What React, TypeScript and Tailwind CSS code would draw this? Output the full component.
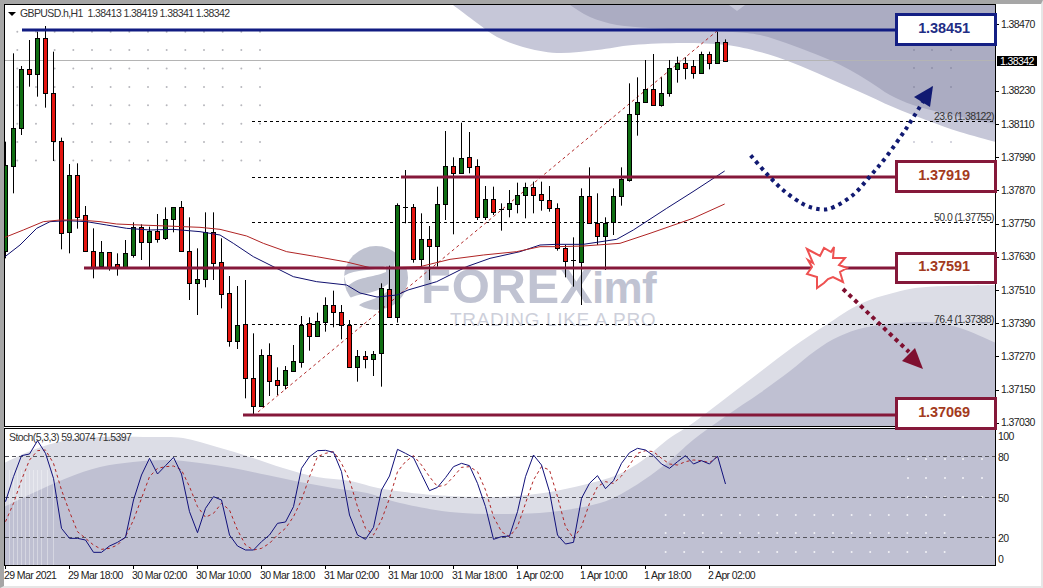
import React from "react";

type Pt = [number, number];
type Candle = [number, number, number, number, "g" | "r" | "d"];

// candle values are read off a 3x zoom, divided by 3 when drawn
const candles: Candle[] = [
  [425, 495, 752, 775, "g"], [160, 385, 497, 580, "g"], [198, 207, 385, 405, "g"], [120, 207, 222, 260, "r"],
  [95, 114, 223, 290, "g"], [78, 114, 280, 323, "r"], [155, 280, 422, 483, "r"], [413, 422, 700, 748, "r"],
  [492, 526, 697, 760, "g"], [490, 526, 650, 686, "r"], [618, 646, 752, 752, "r"], [685, 752, 802, 835, "r"],
  [723, 757, 797, 797, "g"], [757, 757, 802, 812, "r"], [760, 793, 802, 827, "r"], [720, 760, 802, 802, "g"],
  [667, 682, 764, 773, "g"], [673, 682, 725, 780, "r"], [680, 694, 725, 802, "g"], [642, 694, 716, 728, "r"],
  [622, 658, 713, 720, "g"], [622, 622, 656, 697, "g"], [603, 622, 754, 754, "r"], [652, 754, 850, 900, "r"],
  [745, 838, 850, 945, "g"], [637, 697, 838, 862, "g"], [637, 697, 790, 840, "r"], [715, 787, 883, 925, "r"],
  [828, 880, 1022, 1040, "r"], [858, 975, 1022, 1047, "g"], [840, 973, 1135, 1195, "r"], [1000, 1135, 1217, 1245, "r"],
  [1048, 1066, 1217, 1217, "g"], [1030, 1066, 1142, 1188, "r"], [1102, 1140, 1154, 1185, "r"], [1098, 1110, 1154, 1168, "g"],
  [1035, 1083, 1112, 1112, "g"], [948, 975, 1085, 1103, "g"], [952, 970, 1007, 1052, "r"], [938, 964, 1007, 1007, "g"],
  [892, 916, 965, 995, "g"], [872, 916, 937, 982, "r"], [915, 937, 976, 1018, "r"], [960, 974, 1102, 1102, "r"],
  [1050, 1068, 1102, 1145, "g"], [1053, 1068, 1078, 1105, "r"], [1053, 1062, 1078, 1128, "g"], [850, 865, 1060, 1160, "g"],
  [797, 868, 952, 952, "r"], [610, 616, 952, 968, "g"], [510, 620, 622, 670, "d"], [612, 622, 778, 788, "r"],
  [640, 717, 778, 800, "g"], [678, 717, 738, 840, "r"], [560, 613, 737, 800, "g"], [393, 498, 613, 660, "g"],
  [472, 498, 520, 703, "r"], [368, 474, 520, 520, "g"], [396, 472, 502, 520, "r"], [478, 498, 650, 660, "r"],
  [558, 598, 650, 660, "g"], [560, 598, 635, 645, "r"], [610, 628, 630, 692, "d"], [570, 610, 628, 652, "g"],
  [548, 585, 612, 640, "g"], [548, 562, 586, 655, "g"], [545, 560, 584, 640, "r"], [545, 583, 601, 632, "r"],
  [558, 601, 623, 635, "r"], [610, 625, 745, 752, "r"], [735, 745, 782, 832, "r"], [712, 780, 782, 860, "d"],
  [565, 587, 785, 915, "g"], [502, 587, 668, 668, "r"], [580, 668, 707, 735, "r"], [652, 668, 707, 810, "g"],
  [565, 587, 665, 705, "g"], [502, 538, 587, 617, "g"], [250, 343, 540, 545, "g"], [232, 307, 343, 407, "g"],
  [180, 268, 307, 307, "g"], [162, 268, 314, 314, "r"], [232, 280, 315, 320, "g"], [180, 205, 280, 290, "g"],
  [170, 190, 208, 248, "g"], [172, 190, 203, 238, "r"], [180, 197, 220, 236, "r"], [155, 163, 220, 220, "g"],
  [155, 163, 190, 208, "r"], [95, 125, 190, 190, "g"], [118, 125, 182, 182, "r"],
];

const stochMain = [
  635, 560, 497, 492, 452, 490, 565, 715, 745, 745, 750, 787, 787, 768, 757, 742, 630, 555, 505, 552, 527, 502,
  552, 665, 728, 655, 620, 630, 735, 768, 780, 780, 755, 735, 700, 696, 650, 535, 500, 482, 481, 487, 545, 675,
  735, 748, 712, 600, 558, 478, 490, 503, 553, 602, 592, 563, 530, 520, 527, 580, 650, 748, 740, 738, 665, 560,
  495, 525, 605, 735, 762, 757, 625, 580, 557, 596, 572, 520, 488, 475, 480, 497, 522, 535, 515, 497, 522, 512,
  522, 498, 582,
];
const stochSignal = [
  695, 640, 570, 510, 482, 480, 520, 600, 665, 725, 745, 765, 778, 775, 765, 740, 690, 625, 560, 535, 530, 528,
  540, 590, 650, 682, 670, 640, 660, 720, 765, 780, 775, 760, 735, 715, 680, 630, 560, 500, 490, 485, 520, 570,
  650, 715, 735, 690, 625, 545, 515, 497, 525, 560, 590, 585, 560, 532, 530, 545, 600, 680, 725, 740, 710, 640,
  570, 530, 540, 620, 710, 745, 710, 640, 590, 575, 580, 558, 525, 490, 482, 485, 505, 522, 525, 515, 510, 512,
  518, 500,
];

const z1 = (p: Pt[]): Pt[] => p.map(([x, y]) => [x / 3, y / 3]);
const z2 = (p: Pt[]): Pt[] => p.map(([x, y]) => [350 + x / 3, y / 3]);
const z3 = (p: Pt[]): Pt[] => p.map(([x, y]) => [693 + x / 3, y / 3]);

const maBlue: Pt[] = [
  ...z1([[15, 770], [60, 735], [110, 685], [150, 665], [200, 662], [260, 665], [320, 675], [380, 685], [450, 690], [520, 688], [600, 695], [660, 705], [700, 730], [760, 770], [830, 805], [880, 830], [950, 845], [1040, 855]]),
  [360, 293], [377, 297], [397, 295], [408, 290],
  ...z2([[260, 845], [350, 800], [420, 775], [510, 755], [570, 735], [620, 733], [700, 733], [800, 718], [850, 690], [950, 625]]),
  ...z3([[0, 575], [95, 513]]),
];
const maRed: Pt[] = [
  ...z1([[15, 712], [70, 690], [130, 665], [180, 660], [240, 660], [300, 665], [350, 672], [420, 675], [500, 678], [600, 682], [660, 688], [740, 708], [790, 730], [860, 755], [950, 770], [1040, 786]]),
  ...z2([[60, 803], [120, 803], [210, 800], [300, 778], [400, 765], [500, 755], [570, 740], [620, 740], [700, 738], [810, 730], [900, 700]]),
  ...z3([[0, 655], [95, 612]]),
];
const blueCurve: Pt[] = z3([[173, 466], [220, 520], [270, 570], [330, 612], [380, 628], [420, 622], [480, 585], [530, 530], [580, 470], [640, 385], [690, 305]]);

const lightTop: Pt[] = [[453, 5], [477, 23], [497, 37], [523, 47], [557, 53], [597, 50], [633, 45], [683, 43], [726, 45], [760, 52], [793, 63], [826, 77], [860, 92], [893, 107], [926, 120], [960, 132], [996, 142]];
const darkTop: Pt[] = [[570, 5], [590, 17], [617, 25], [650, 28], [693, 30], [733, 32], [760, 35], [786, 43], [810, 52], [830, 60], [850, 70], [870, 82], [890, 95], [913, 105], [943, 113], [970, 119], [996, 124]];
const lightLow: Pt[] = [[4, 463], [33, 450], [67, 440], [100, 437], [150, 437], [183, 438], [217, 447], [250, 457], [283, 468], [317, 477], [350, 481], [383, 489], [433, 495], [483, 497], [517, 496], [550, 492], [583, 485], [617, 475], [643, 460], [667, 440], [693, 423], [726, 398], [760, 372], [793, 347], [826, 325], [860, 304], [893, 293], [926, 287], [996, 285]];
const darkLow: Pt[] = [[4, 507], [33, 493], [67, 478], [100, 467], [133, 462], [167, 460], [200, 463], [233, 468], [267, 475], [300, 482], [333, 488], [367, 493], [400, 503], [450, 512], [500, 514], [550, 512], [600, 503], [633, 487], [667, 463], [693, 440], [726, 416], [760, 393], [790, 371], [815, 351], [840, 336], [873, 326], [926, 322], [960, 328], [996, 343]];

// catmull-rom through the points, so the backdrop curves don't look faceted
const smooth = (p: Pt[]) => {
  let d = `M${p[0][0]} ${p[0][1]}`;
  for (let i = 0; i < p.length - 1; i++) {
    const a = p[Math.max(i - 1, 0)];
    const b = p[i];
    const c = p[i + 1];
    const e = p[Math.min(i + 2, p.length - 1)];
    d += `C${b[0] + (c[0] - a[0]) / 6} ${b[1] + (c[1] - a[1]) / 6} ${c[0] - (e[0] - b[0]) / 6} ${c[1] - (e[1] - b[1]) / 6} ${c[0]} ${c[1]}`;
  }
  return d;
};
const line = (p: Pt[]) => p.map(([x, y]) => `${x},${y}`).join(" ");

const prices = ["1.38470", "1.38342", "1.38230", "1.38110", "1.37990", "1.37870", "1.37750", "1.37630", "1.37510", "1.37390", "1.37270", "1.37150", "1.37030"];
const times = ["29 Mar 2021", "29 Mar 18:00", "30 Mar 02:00", "30 Mar 10:00", "30 Mar 18:00", "31 Mar 02:00", "31 Mar 10:00", "31 Mar 18:00", "1 Apr 02:00", "1 Apr 10:00", "1 Apr 18:00", "2 Apr 02:00"];

const Backdrop = () => (
  <g>
    <path d={`${smooth(lightTop)}L996 0L453 0Z`} fill="#c6c7d8" />
    <path d={`${smooth(darkTop)}L996 0L570 0Z`} fill="#abacc2" />
    <path d="M729 5L737 11L745 5Z" fill="#c6c7d8" />
    <path d={`${smooth(lightLow)}L996 570L4 570Z`} fill="#dcdde6" />
    <path d={`${smooth(darkLow)}L996 570L4 570Z`} fill="#bfc0d2" />
  </g>
);

const Dots = ({ xs, ys, fill }: { xs: number[]; ys: number[]; fill: string }) => (
  <g fill={fill}>
    {ys.map((y) => xs.map((x) => <circle key={`${x}-${y}`} cx={x} cy={y} r={1} />))}
  </g>
);

const Watermark = () => (
  <g>
    <circle cx={376} cy={278} r={32} fill="#bfc2d0" />
    <path d="M344 276C356 268 372 272 386 266L386 272C372 278 358 276 347 287Z" fill="#fff" />
    <path d="M350 298C362 292 372 296 388 284L388 291C376 301 364 300 358 306Z" fill="#fff" />
    <path d="M396 252L412 252L412 268L394 268Z" fill="#fff" />
    <text x={421} y={303} fontSize={49} fontWeight={700} fill="#c0c3d2" textLength={171}>FOREX</text>
    <text x={592} y={303} fontSize={44} fontWeight={700} fill="#c0c3d2" textLength={64}>imf</text>
    <text x={450} y={326} fontSize={19} fill="#cdcfda" textLength={205}>TRADING LIKE A PRO</text>
  </g>
);

const Candles = () => (
  <g>
    {candles.map(([hi, top, bot, lo, c], i) => {
      const x = 5.5 + 8 * i;
      const t = Math.round(top / 3) + 0.5;
      const b = Math.round(bot / 3) + 0.5;
      return (
        <g key={i}>
          <line x1={x} x2={x} y1={hi / 3} y2={lo / 3} stroke="#000" />
          {c === "d" ? (
            <line x1={x - 2.5} x2={x + 2.5} y1={t} y2={t} stroke="#000" />
          ) : (
            <rect x={x - 2} y={t} width={4} height={b - t} fill={c === "g" ? "#0f6e12" : "#e3140f"} stroke="#000" />
          )}
        </g>
      );
    })}
  </g>
);

const FibLevel = ({ y, x1 = 252, label }: { y: number; x1?: number; label?: string }) => (
  <g>
    <line x1={x1} x2={996} y1={y} y2={y} stroke="#000" strokeDasharray="3 3" />
    {label && (
      <text x={994} y={y - 2} textAnchor="end" fontSize={10.5} letterSpacing={-0.6} fill="#333">
        {label}
      </text>
    )}
  </g>
);

const MainChart = () => (
  <svg viewBox="5 5 990 421" className="block w-full h-full">
    <Backdrop />
    <Dots xs={Array.from({ length: 14 }, (_, i) => 17.3 + 18.67 * i)} ys={Array.from({ length: 8 }, (_, j) => 31.7 + 18.4 * j)} fill="#b7b7bd" />
    <Dots xs={[914, 932, 951]} ys={[50, 68, 87]} fill="#8f90a8" />
    <Dots xs={[914, 932, 951]} ys={[142]} fill="#c9c9d4" />
    <Watermark />
    <line x1={5} x2={996} y1={60.5} y2={60.5} stroke="#b4b4b4" />
    <FibLevel y={121.5} label="23.6 (1.38122)" />
    <line x1={252} x2={401} y1={177.5} y2={177.5} stroke="#000" strokeDasharray="3 3" />
    <FibLevel y={222.5} label="50.0 (1.37755)" />
    <FibLevel y={324.5} label="76.4 (1.37388)" />
    <line x1={258} y1={412} x2={717} y2={31} stroke="#b22a2a" strokeDasharray="3 3" />
    <Candles />
    <polyline points={line(maBlue)} fill="none" stroke="#10106e" />
    <polyline points={line(maRed)} fill="none" stroke="#b02424" />
    <line x1={22} x2={896} y1={30} y2={30} stroke="#111c82" strokeWidth={3} />
    <line x1={401} x2={896} y1={177} y2={177} stroke="#85183a" strokeWidth={3} />
    <line x1={84} x2={896} y1={268} y2={268} stroke="#85183a" strokeWidth={3} />
    <line x1={243} x2={896} y1={415} y2={415} stroke="#85183a" strokeWidth={3} />
    <path d={smooth(blueCurve)} fill="none" stroke="#111a72" strokeWidth={4} strokeDasharray="3.6 4.2" />
    <polygon points="933,86 930,107 914,97" fill="#111a72" />
    <line x1={843} y1={289} x2={909} y2={352} stroke="#7f1030" strokeWidth={4} strokeDasharray="4 4" />
    <polygon points="915,348 923,369 902,361" fill="#7f1030" />
    <polygon
      points="807,249 820,256 824,248 831,252 834,247 833,258 845,258 839,265 847,268 840,272 843,282 833,277 828,279 824,283 817,288 817,277 807,274 812,267 808,260 813,263"
      fill="#fff"
      stroke="#ee5050"
      strokeWidth={2}
    />
  </svg>
);

const StochChart = () => (
  <svg viewBox="5 429 990 136" className="block w-full h-full">
    <Backdrop />
    <g stroke="#fff" strokeOpacity={0.35}>
      {[9, 13, 17, 21, 25, 29, 33, 37, 41, 47, 53].map((x) => (
        <line key={x} x1={x + 0.5} x2={x + 0.5} y1={470} y2={565} />
      ))}
    </g>
    <Dots xs={Array.from({ length: 16 }, (_, i) => 665.6 + 18.6 * i)} ys={[515, 533, 552]} fill="#f2f2f6" />
    <Dots xs={[908, 926, 945, 963, 982]} ys={[459, 478, 497]} fill="#f2f2f6" />
    {[456.5, 497.5, 537.5].map((y) => (
      <line key={y} x1={5} x2={996} y1={y} y2={y} stroke="#55555c" strokeDasharray="4 3" />
    ))}
    <polyline points={stochSignal.map((v, i) => `${5.5 + 8 * i},${290 + v / 3}`).join(" ")} fill="none" stroke="#b02424" strokeDasharray="3 3" />
    <polyline points={stochMain.map((v, i) => `${5.5 + 8 * i},${290 + v / 3}`).join(" ")} fill="none" stroke="#10107a" />
  </svg>
);

const LevelBox = ({ value, className }: { value: string; className: string }) => (
  <div className={`absolute left-[891px] w-[102px] flex items-center justify-center bg-white border-[3px] pr-[4px] pb-[2px] font-bold text-[14.5px] tracking-[-0.1px] ${className}`}>
    {value}
  </div>
);

export default function App() {
  return (
    <div className="relative w-[1043px] h-[588px] overflow-hidden flex flex-col bg-white border-l-[4px] border-t-[4px] border-r-[2px] border-b-[2px] border-l-[#a6a6a6] border-t-[#a6a6a6] border-r-[#e6e6e6] border-b-[#e6e6e6] font-['Liberation_Sans',sans-serif] text-[10.5px] tracking-[-0.6px] text-[#222]">
      <div className="flex h-[423px]">
        <div className="relative w-[992px] h-full border border-black">
          <MainChart />
          <div className="absolute left-[3px] top-[1px] flex items-center gap-[4px] text-[#333] whitespace-pre">
            <span className="w-0 h-0 border-l-[4px] border-r-[4px] border-t-[4px] border-l-transparent border-r-transparent border-t-black" />
            <span>GBPUSD.h,H1  1.38413 1.38419 1.38341 1.38342</span>
          </div>
        </div>
        <div className="flex flex-col pt-[4.4px]">
          {prices.map((p, i) =>
            i === 1 ? (
              <div key={p} className="flex items-center shrink-0 h-[33.2px] pt-[5px] pl-[1px]">
                <span className="bg-black text-white pl-[3px] pr-[3px] h-[10px] leading-[10px]">{p}</span>
              </div>
            ) : (
              <div key={p} className="flex items-center shrink-0 h-[33.2px] gap-[2px]">
                <span className="w-[3px] h-px bg-black" />
                <span>{p}</span>
              </div>
            )
          )}
        </div>
      </div>

      <div className="flex h-[138px] mt-[1px]">
        <div className="relative w-[992px] h-full border border-black">
          <StochChart />
          <div className="absolute left-[4px] top-[1px] text-[#333]">Stoch(5,3,3) 59.3074 71.5397</div>
        </div>
        <div className="flex flex-col pl-[2px] pt-[1px]">
          <span className="h-[14px] leading-[14px]">100</span>
          <span className="h-[14px] leading-[14px] mt-[7px]">80</span>
          <span className="h-[14px] leading-[14px] mt-[27px]">50</span>
          <span className="h-[14px] leading-[14px] mt-[26px]">20</span>
          <span className="h-[14px] leading-[14px] mt-[7px]">0</span>
        </div>
      </div>

      <div className="flex h-[20px]">
        {times.map((t) => (
          <div key={t} className="w-[64px] flex flex-col shrink-0">
            <span className="w-px h-[3px] bg-black ml-[1px]" />
            <span className="leading-[13px] whitespace-nowrap">{t}</span>
          </div>
        ))}
      </div>

      <LevelBox value="1.38451" className="top-[9px] h-[33px] border-[#141f84] text-[#1f2e85]" />
      <LevelBox value="1.37919" className="top-[156px] h-[33px] border-[#85183a] text-[#a33a20]" />
      <LevelBox value="1.37591" className="top-[248px] h-[32px] border-[#85183a] text-[#a33a20]" />
      <LevelBox value="1.37069" className="top-[393px] h-[33px] border-[#85183a] text-[#a33a20]" />
    </div>
  );
}
